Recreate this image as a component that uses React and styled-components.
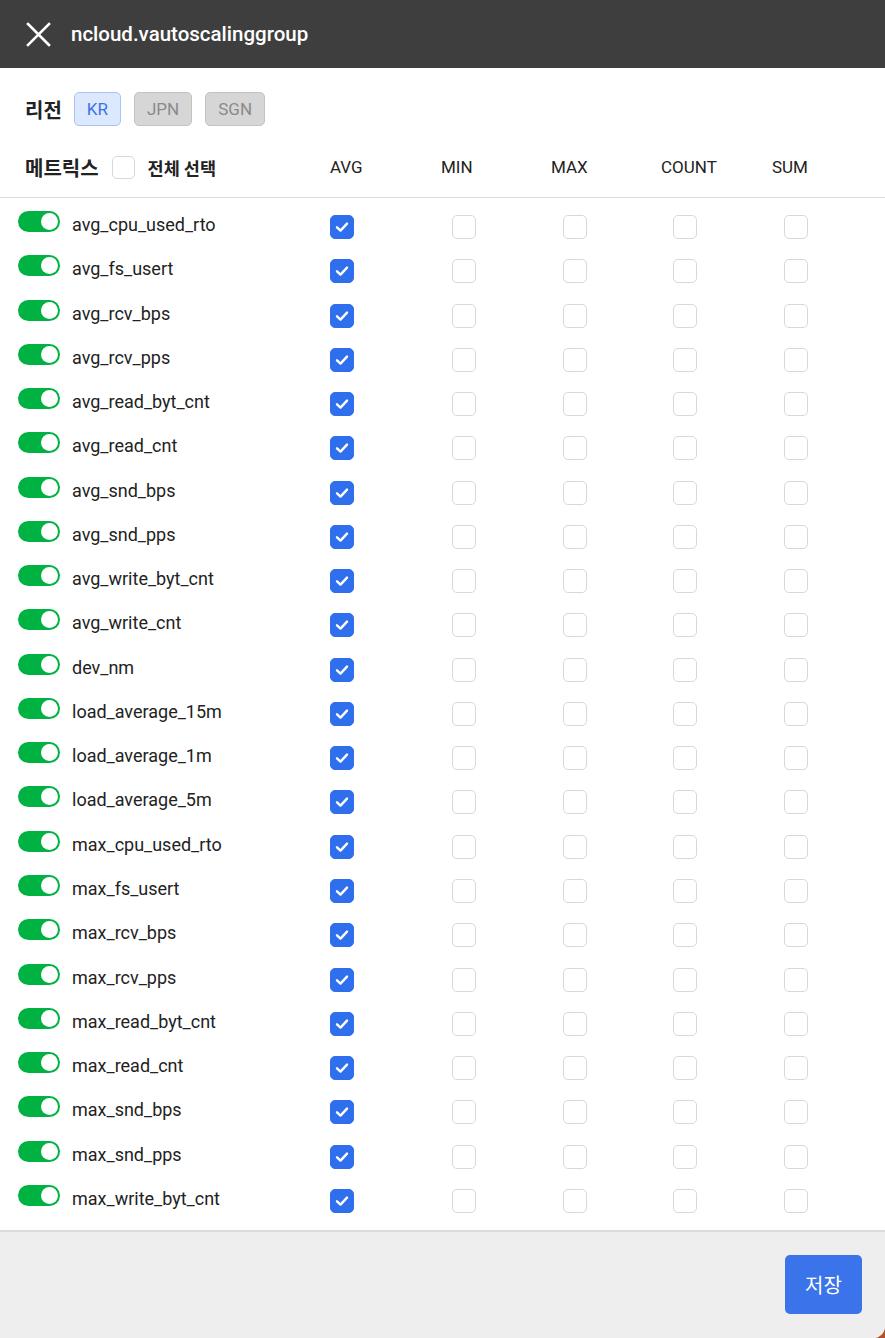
import React from "react";
import styled, { createGlobalStyle } from "styled-components";

const GlobalStyle = createGlobalStyle`
  html, body { margin: 0; padding: 0; }
  body {
    background: #b0532b;
    font-family: Roboto, "Noto Sans CJK KR", sans-serif;
    color: #222;
  }
  * { box-sizing: border-box; }
`;

const METRICS = [
  "avg_cpu_used_rto", "avg_fs_usert", "avg_rcv_bps", "avg_rcv_pps", "avg_read_byt_cnt",
  "avg_read_cnt", "avg_snd_bps", "avg_snd_pps", "avg_write_byt_cnt", "avg_write_cnt",
  "dev_nm", "load_average_15m", "load_average_1m", "load_average_5m", "max_cpu_used_rto",
  "max_fs_usert", "max_rcv_bps", "max_rcv_pps", "max_read_byt_cnt", "max_read_cnt",
  "max_snd_bps", "max_snd_pps", "max_write_byt_cnt",
];
const STATS = ["AVG", "MIN", "MAX", "COUNT", "SUM"];

const Panel = styled.div`
  width: 885px;
  height: 1338px;
  background: #fff;
  border-bottom-right-radius: 12px;
  overflow: hidden;
  display: flex;
  flex-direction: column;
`;

const Header = styled.header`
  height: 68px;
  background: #3e3e3e;
  display: flex;
  align-items: center;
  padding-left: 26px;
  gap: 20px;
  color: #fff;
  flex-shrink: 0;
`;

const CloseButton = styled.button`
  width: 25px;
  height: 25px;
  padding: 0;
  border: none;
  background: transparent;
  display: flex;
  align-items: center;
  justify-content: center;
  cursor: pointer;
`;

const Title = styled.h1`
  margin: 0;
  font-size: 20.5px;
  font-weight: 500;
  letter-spacing: 0;
`;

const Top = styled.section`
  padding: 24px 0 0 25px;
`;

const RegionRow = styled.div`
  display: flex;
  align-items: center;
  height: 34px;
`;

const Label = styled.span`
  font-family: "Noto Sans CJK KR", sans-serif;
  font-size: 20px;
  font-weight: 700;
  color: #222;
  margin-right: ${(p) => p.$gap || 0}px;
`;

const RegionButton = styled.button`
  height: 34px;
  padding: 0 12px;
  margin-right: 13px;
  border-radius: 5px;
  font-family: Roboto, sans-serif;
  font-size: 17px;
  border: 1px solid ${(p) => (p.$active ? "#a8c4f5" : "#c3c3c3")};
  background: ${(p) => (p.$active ? "#dce8fd" : "#d6d6d6")};
  color: ${(p) => (p.$active ? "#3a72e8" : "#8a8a8a")};
  cursor: pointer;
`;

const HeaderGrid = styled.div`
  display: grid;
  grid-template-columns: 305px 111px 110px 110px 111px 1fr;
  align-items: center;
  height: 40px;
  margin-top: 21px;
  margin-bottom: 10px;
`;

const SelectAll = styled.div`
  display: flex;
  align-items: center;
`;

const SelectAllText = styled.span`
  font-family: "Noto Sans CJK KR", sans-serif;
  font-size: 17.5px;
  font-weight: 700;
  color: #222;
  margin-left: 13px;
`;

const ColHead = styled.span`
  font-size: 17px;
  color: #222;
`;

const Divider = styled.div`
  height: ${(p) => p.$h || 1}px;
  background: #dcdcdc;
  flex-shrink: 0;
`;

const List = styled.div`
  padding-bottom: 14px;
`;

const Row = styled.div`
  display: grid;
  grid-template-columns: 312px 122px 111px 110px 111px 1fr;
  align-items: start;
  height: 44.27px;
  padding-left: 18px;
`;

const NameCell = styled.div`
  display: flex;
  align-items: flex-start;
`;

const Toggle = styled.span`
  position: relative;
  display: inline-block;
  width: 42px;
  height: 21px;
  margin-top: 13px;
  border-radius: 11px;
  background: #00b241;
  flex-shrink: 0;
  &::after {
    content: "";
    position: absolute;
    right: 2px;
    top: 2px;
    width: 17px;
    height: 17px;
    border-radius: 50%;
    background: #fff;
  }
`;

const Name = styled.span`
  margin-left: 12px;
  margin-top: 16px;
  font-size: 18px;
  line-height: 21px;
  color: #222;
`;

const Box = styled.span`
  display: inline-flex;
  align-items: center;
  justify-content: center;
  width: ${(p) => p.$size || 24}px;
  height: ${(p) => p.$size || 24}px;
  margin-top: ${(p) => p.$top ?? 17}px;
  border-radius: 5px;
  border: 1px solid ${(p) => (p.$checked ? "#2f6fed" : "#d8d8d8")};
  background: ${(p) => (p.$checked ? "#2f6fed" : "#fff")};
  flex-shrink: 0;
`;

const Footer = styled.footer`
  flex: 1;
  background: #eeeeee;
  display: flex;
  justify-content: flex-end;
  align-items: flex-start;
  padding: 23px 23px 0 0;
`;

const SaveButton = styled.button`
  width: 77px;
  height: 59px;
  border: none;
  border-radius: 5px;
  background: #3a73ea;
  color: #fff;
  font-family: "Noto Sans CJK KR", sans-serif;
  font-size: 20px;
  cursor: pointer;
`;

const Check = () => (
  <svg width="16" height="16" viewBox="0 0 16 16" fill="none">
    <path d="M3 8.3 L6.5 11.6 L13 4.6" stroke="#fff" strokeWidth="2.4" strokeLinecap="round" strokeLinejoin="round" />
  </svg>
);

const Checkbox = ({ checked, size, top }) => (
  <Box $checked={checked} $size={size} $top={top}>
    {checked && <Check />}
  </Box>
);

export default function App() {
  return (
    <>
      <GlobalStyle />
      <Panel>
        <Header>
          <CloseButton aria-label="close">
            <svg width="25" height="25" viewBox="0 0 25 25">
              <path d="M2 2 L23 23 M23 2 L2 23" stroke="#fff" strokeWidth="2.6" strokeLinecap="square" />
            </svg>
          </CloseButton>
          <Title>ncloud.vautoscalinggroup</Title>
        </Header>
        <Top>
          <RegionRow>
            <Label $gap={12}>리전</Label>
            <RegionButton $active>KR</RegionButton>
            <RegionButton>JPN</RegionButton>
            <RegionButton>SGN</RegionButton>
          </RegionRow>
          <HeaderGrid>
            <SelectAll>
              <Label $gap={13}>메트릭스</Label>
              <Checkbox size={23} top={0} />
              <SelectAllText>전체 선택</SelectAllText>
            </SelectAll>
            {STATS.map((s) => (
              <ColHead key={s}>{s}</ColHead>
            ))}
          </HeaderGrid>
        </Top>
        <Divider />
        <List>
          {METRICS.map((m) => (
            <Row key={m}>
              <NameCell>
                <Toggle />
                <Name>{m}</Name>
              </NameCell>
              {STATS.map((s, i) => (
                <div key={s}>
                  <Checkbox checked={i === 0} />
                </div>
              ))}
            </Row>
          ))}
        </List>
        <Divider $h={2} />
        <Footer>
          <SaveButton>저장</SaveButton>
        </Footer>
      </Panel>
    </>
  );
}
